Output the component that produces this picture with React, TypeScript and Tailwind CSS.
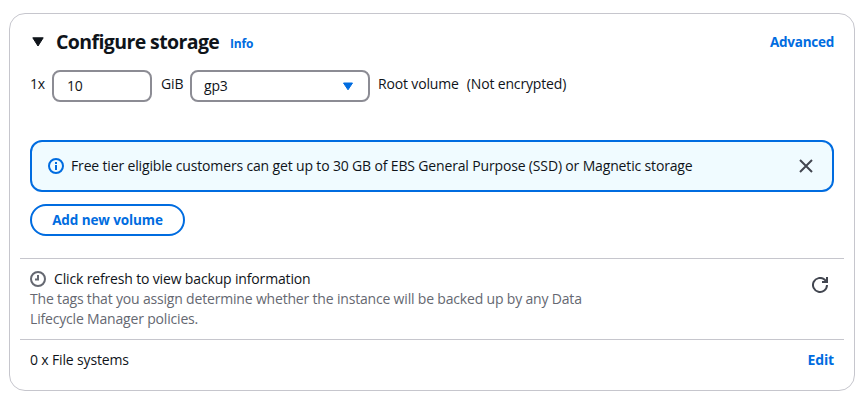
import React from "react";

export default function App() {
  return (
    <div className="h-[400px] w-[863px] overflow-hidden bg-white pl-[9px] pt-[13px] font-['Open_Sans',sans-serif] text-[14px] leading-5 tracking-[-0.155px] text-[#0f141a]">
      <section className="h-[378px] w-[846px] rounded-[16px] border border-[#c6c6cd]">
        <header className="flex h-[56px] items-center pl-[22px] pr-5">
          <svg width="12" height="10" viewBox="0 0 12 10" className="shrink-0">
            <path d="M0.8 0.8H11.2L6 9Z" fill="#0f141a" stroke="#0f141a" strokeLinejoin="round" />
          </svg>
          <h2 className="ml-[12px] w-[163px] whitespace-nowrap text-[19.5px] font-bold leading-6 tracking-[-0.6px]">Configure storage</h2>
          <a className="ml-[11px] mt-1 text-[12px] font-bold tracking-[-0.2px] text-[#006ce0]">Info</a>
          <a className="ml-auto text-[13.5px] font-bold tracking-[-0.25px] text-[#006ce0]">Advanced</a>
        </header>
        <div className="flex h-8 items-center pl-5">
          <span className="-mt-1 w-[22px]">1x</span>
          <div className="flex h-8 w-[100px] items-center rounded-lg border-2 border-[#8c8c94] pl-[13px]">10</div>
          <span className="-mt-1 ml-[9px] w-[29px]">GiB</span>
          <div className="flex h-8 w-[180px] items-center justify-between rounded-lg border-2 border-[#8c8c94] pl-[12px] pr-[14px]">
            gp3
            <svg width="12" height="9" viewBox="0 0 12 9"><path d="M1.5 1H10.5L6 7.8Z" fill="#006ce0" stroke="#006ce0" strokeLinejoin="round" /></svg>
          </div>
          <span className="-mt-1 ml-2">Root volume</span>
          <span className="-mt-1 ml-2">(Not encrypted)</span>
        </div>
        <div className="ml-5 mt-[38px] flex h-[52px] w-[804px] items-center rounded-xl border-2 border-[#006ce0] bg-[#f0fbff] pl-[16px] pr-[18px]">
          <svg width="16" height="16" viewBox="0 0 16 16" fill="none" stroke="#006ce0" strokeWidth="2">
            <circle cx="8" cy="8" r="7" /><path d="M8 12V7M8 6V4" />
          </svg>
          <span className="ml-[7px]">Free tier eligible customers can get up to 30 GB of EBS General Purpose (SSD) or Magnetic storage</span>
          <svg className="ml-auto" width="16" height="16" viewBox="0 0 16 16" stroke="#424650" strokeWidth="2"><path d="M2 2L14 14M14 2L2 14" /></svg>
        </div>
        <button className="ml-5 mt-3 flex h-8 w-[155px] items-center justify-center rounded-full border-2 border-[#006ce0] text-[13.5px] font-bold tracking-[-0.1px] text-[#006ce0]">Add new volume</button>
        <div className="mx-[10px] mt-[22px] flex h-[82px] border-y border-[#c6c6cd] pl-[10px] pr-[16px] pt-[10px]">
          <div>
            <div className="flex items-center">
              <svg width="16" height="16" viewBox="0 0 16 16" fill="none" stroke="#656871" strokeWidth="2"><circle cx="8" cy="8" r="7" /><path d="M8 4V8.5H5" /></svg>
              <span className="ml-2">Click refresh to view backup information</span>
            </div>
            <p className="tracking-[-0.18px] text-[#656871]">The tags that you assign determine whether the instance will be backed up by any Data<br />Lifecycle Manager policies.</p>
          </div>
          <svg className="ml-auto mt-2" width="16" height="16" viewBox="0 0 16 16" fill="none" stroke="#424650" strokeWidth="2"><path d="M15 8A7 7 0 1 1 12.5 2.6L15 5M10 5H15V0" /></svg>
        </div>
        <div className="flex h-10 items-center justify-between px-5">
          <span>0 x File systems</span><a className="font-bold text-[#006ce0]">Edit</a>
        </div>
      </section>
    </div>
  );
}
